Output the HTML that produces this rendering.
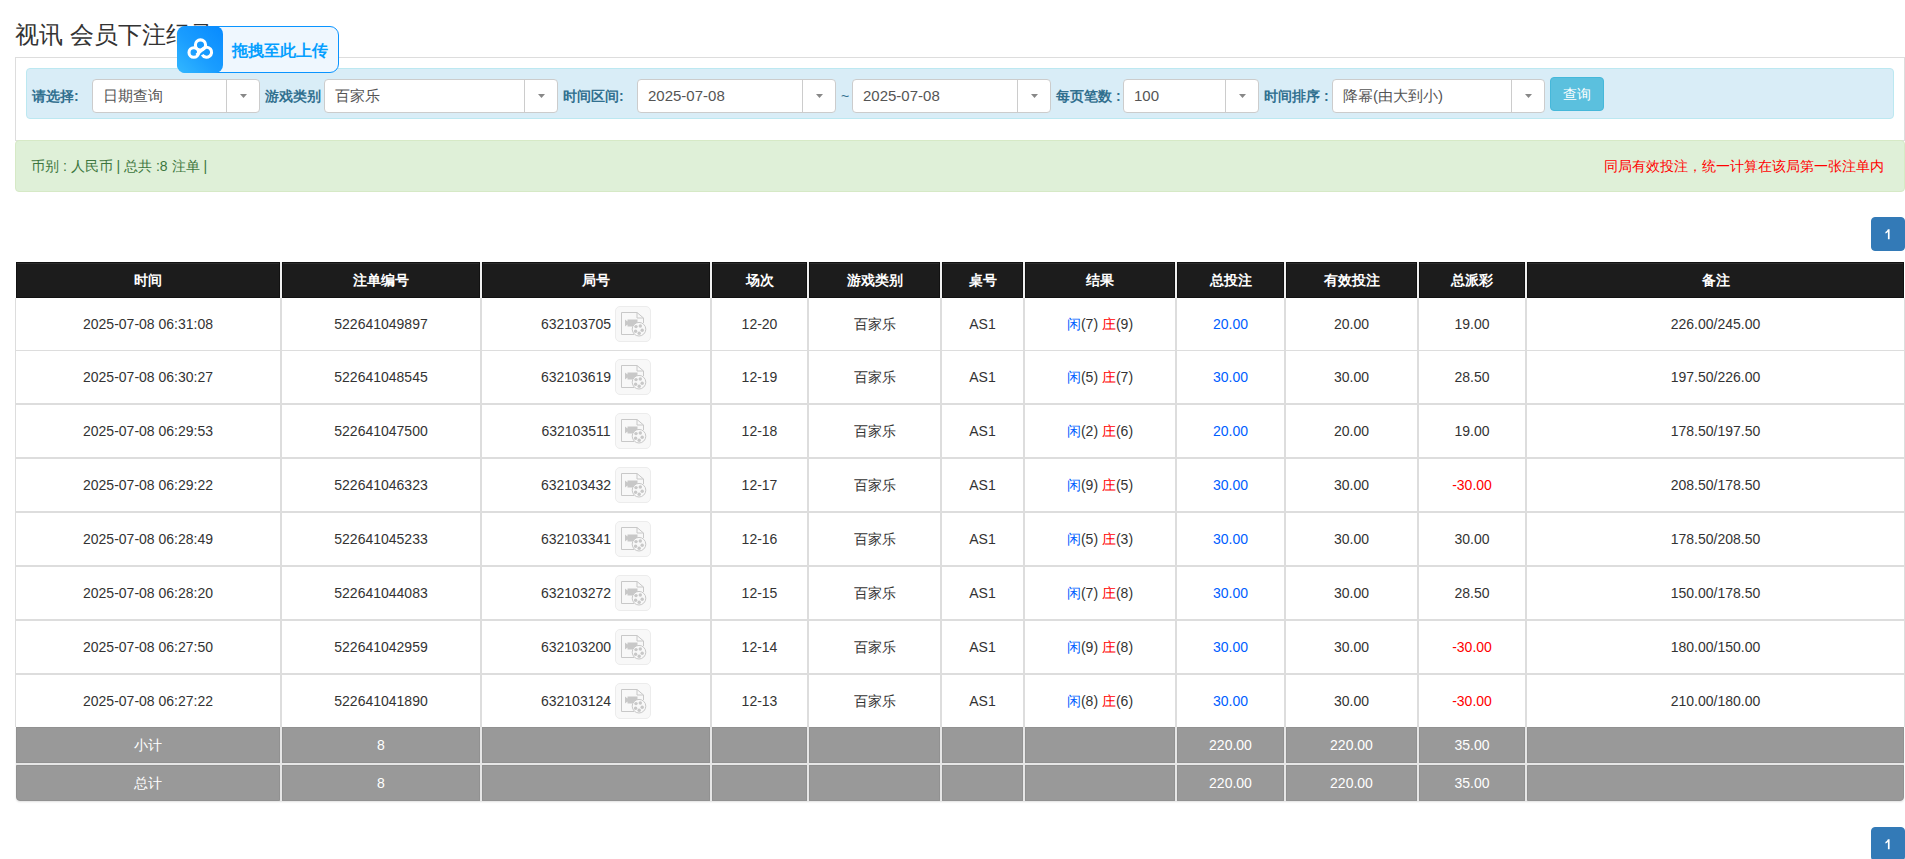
<!DOCTYPE html>
<html><head><meta charset="utf-8">
<style>
*{box-sizing:border-box;margin:0;padding:0}
html,body{width:1905px;height:859px;overflow:hidden;background:#fff}
body{font-family:"Liberation Sans",sans-serif;font-size:14px;color:#333;position:relative}
.abs{position:absolute}
.title{position:absolute;left:15px;top:18px;font-size:24px;line-height:34px;color:#333;white-space:nowrap}
.panel{position:absolute;left:15px;top:57px;width:1890px;height:84px;border:1px solid #ddd;background:#fff}
.well{position:absolute;left:26px;top:68px;width:1868px;height:51px;background:#d9edf7;border:1px solid #bce8f1;border-radius:4px}
.lbl{position:absolute;top:79px;height:34px;line-height:34px;font-size:14px;font-weight:bold;color:#31708f;white-space:nowrap}
.sel{position:absolute;top:79px;height:34px;background:#fff;border:1px solid #ccc;border-radius:4px}
.sel .t{position:absolute;left:10px;top:0;line-height:32px;font-size:15px;color:#555;white-space:nowrap}
.sel .ar{position:absolute;right:0;top:0;width:33px;height:32px;border-left:1px solid #ccc}
.sel .ar:after{content:"";position:absolute;left:13px;top:14px;width:7px;height:4px;background:#888;clip-path:polygon(0 0,100% 0,50% 100%)}
.btn{position:absolute;left:1550px;top:77px;width:54px;height:34px;background:#5bc0de;border:1px solid #46b8da;border-radius:4px;color:#fff;font-size:14px;line-height:32px;text-align:center}
.alert{position:absolute;left:15px;top:140px;width:1890px;height:52px;background:#dff0d8;border:1px solid #d6e9c6;border-radius:4px}
.alert .l{position:absolute;left:15px;top:0;line-height:50px;font-size:14px;color:#3c763d;white-space:nowrap}
.alert .r{position:absolute;right:20px;top:0;line-height:50px;font-size:14px;color:#f00;white-space:nowrap}
.pg{position:absolute;left:1871px;width:34px;height:34px;background:#337ab7;border:1px solid #337ab7;border-radius:4px;color:#fff;font-size:14px;line-height:32px;text-align:center}
.upl{position:absolute;left:177px;top:26px;width:162px;height:47px;border:1px solid #0a94ff;border-radius:9px;background:#eff7fe}
.upt{position:absolute;left:232px;top:39px;font-size:16px;line-height:24px;font-weight:bold;color:#06a0ff;white-space:nowrap}
.th{position:absolute;top:262px;height:36px;background:#1c1c1c;border:1px solid #111;box-shadow:inset 0 1px 0 #2b2b2b;color:#fff;font-weight:bold;font-size:14px;line-height:34px;text-align:center;white-space:nowrap}
.td{position:absolute;background:#fff;text-align:center;white-space:nowrap;font-size:14px;color:#333}
.tf{position:absolute;height:36px;background:#999;border:1px solid #919191;color:#fff;font-size:14px;line-height:34px;text-align:center;white-space:nowrap}
.bl{color:#005eff}.rd{color:#f00}.b2{color:#005eff}
.ic{display:inline-block;vertical-align:middle;margin-left:4px;position:relative;top:-1px}
</style></head><body>
<div class="title">视讯 会员下注纪录</div>
<div class="panel"></div>
<div class="well"></div>
<div class="lbl" style="left:32px">请选择:</div>
<div class="sel" style="left:92px;width:168px"><span class="t">日期查询</span><span class="ar"></span></div>
<div class="lbl" style="left:265px">游戏类别</div>
<div class="sel" style="left:324px;width:234px"><span class="t">百家乐</span><span class="ar"></span></div>
<div class="lbl" style="left:563px">时间区间:</div>
<div class="sel" style="left:637px;width:199px"><span class="t">2025-07-08</span><span class="ar"></span></div>
<div class="lbl" style="left:841px;font-weight:normal">~</div>
<div class="sel" style="left:852px;width:199px"><span class="t">2025-07-08</span><span class="ar"></span></div>
<div class="lbl" style="left:1056px">每页笔数 :</div>
<div class="sel" style="left:1123px;width:136px"><span class="t">100</span><span class="ar"></span></div>
<div class="lbl" style="left:1264px">时间排序 :</div>
<div class="sel" style="left:1332px;width:213px"><span class="t">降幂(由大到小)</span><span class="ar"></span></div>
<div class="btn">查询</div>
<div class="alert"><span class="l">币别 : 人民币 | 总共 :8 注单 |</span><span class="r">同局有效投注，统一计算在该局第一张注单内</span></div>
<div class="pg" style="top:217px"><svg width="32" height="32" viewBox="0 0 32 32" style="position:absolute;left:0;top:0"><path d="M15.9 11.2H17.6V21.2H15.9V13.9Q14.8 14.9 13.4 15.4V14.1Q15.1 13.3 15.9 11.2Z" fill="#fff"/></svg></div>
<div class="abs" style="left:16px;top:262px;width:1888px;height:36px;background:#f0f0f0"></div>
<div class="th" style="left:16px;width:264px">时间</div>
<div class="th" style="left:282px;width:198px">注单编号</div>
<div class="th" style="left:482px;width:228px">局号</div>
<div class="th" style="left:712px;width:95px">场次</div>
<div class="th" style="left:809px;width:131px">游戏类别</div>
<div class="th" style="left:942px;width:81px">桌号</div>
<div class="th" style="left:1025px;width:150px">结果</div>
<div class="th" style="left:1177px;width:107px">总投注</div>
<div class="th" style="left:1286px;width:131px">有效投注</div>
<div class="th" style="left:1419px;width:106px">总派彩</div>
<div class="th" style="left:1527px;width:377px">备注</div>
<div class="abs" style="left:15px;top:298px;width:1890px;height:429px;background:#ddd"></div>
<div class="td" style="left:16px;top:298px;width:264px;height:52px;line-height:52px">2025-07-08 06:31:08</div>
<div class="td" style="left:282px;top:298px;width:198px;height:52px;line-height:52px">522641049897</div>
<div class="td" style="left:482px;top:298px;width:228px;height:52px;line-height:52px">632103705<svg class="ic" width="36" height="36" viewBox="0 0 36 36"><rect x="0.5" y="0.5" width="35" height="35" rx="4.5" fill="#f8f8f8" stroke="#ececec"/><path d="M19 28.5H6.5V6.5H22L28.5 12V17" fill="none" stroke="#c8c8c8"/><path d="M22 6.5V12H28.5" fill="none" stroke="#c8c8c8"/><path d="M10 13.5L12.5 15.5V13.5H22.5V20.5H12.5V18.5L10 20.5Z" fill="#c8c8c8"/><circle cx="24" cy="23.2" r="6.8" fill="#f8f8f8" stroke="#c8c8c8" stroke-width="1"/><circle cx="21" cy="20.6" r="1.7" fill="#c8c8c8"/><circle cx="25.3" cy="20" r="1.7" fill="#c8c8c8"/><circle cx="27.2" cy="24.2" r="1.7" fill="#c8c8c8"/><circle cx="24.2" cy="27.3" r="1.7" fill="#c8c8c8"/><circle cx="20.6" cy="25.2" r="1.7" fill="#c8c8c8"/></svg></div>
<div class="td" style="left:712px;top:298px;width:95px;height:52px;line-height:52px">12-20</div>
<div class="td" style="left:809px;top:298px;width:131px;height:52px;line-height:52px">百家乐</div>
<div class="td" style="left:942px;top:298px;width:81px;height:52px;line-height:52px">AS1</div>
<div class="td" style="left:1025px;top:298px;width:150px;height:52px;line-height:52px"><span class="bl">闲</span>(7) <span class="rd">庄</span>(9)</div>
<div class="td" style="left:1177px;top:298px;width:107px;height:52px;line-height:52px"><span class="b2">20.00</span></div>
<div class="td" style="left:1286px;top:298px;width:131px;height:52px;line-height:52px">20.00</div>
<div class="td" style="left:1419px;top:298px;width:106px;height:52px;line-height:52px">19.00</div>
<div class="td" style="left:1527px;top:298px;width:377px;height:52px;line-height:52px">226.00/245.00</div>
<div class="td" style="left:16px;top:351px;width:264px;height:52px;line-height:52px">2025-07-08 06:30:27</div>
<div class="td" style="left:282px;top:351px;width:198px;height:52px;line-height:52px">522641048545</div>
<div class="td" style="left:482px;top:351px;width:228px;height:52px;line-height:52px">632103619<svg class="ic" width="36" height="36" viewBox="0 0 36 36"><rect x="0.5" y="0.5" width="35" height="35" rx="4.5" fill="#f8f8f8" stroke="#ececec"/><path d="M19 28.5H6.5V6.5H22L28.5 12V17" fill="none" stroke="#c8c8c8"/><path d="M22 6.5V12H28.5" fill="none" stroke="#c8c8c8"/><path d="M10 13.5L12.5 15.5V13.5H22.5V20.5H12.5V18.5L10 20.5Z" fill="#c8c8c8"/><circle cx="24" cy="23.2" r="6.8" fill="#f8f8f8" stroke="#c8c8c8" stroke-width="1"/><circle cx="21" cy="20.6" r="1.7" fill="#c8c8c8"/><circle cx="25.3" cy="20" r="1.7" fill="#c8c8c8"/><circle cx="27.2" cy="24.2" r="1.7" fill="#c8c8c8"/><circle cx="24.2" cy="27.3" r="1.7" fill="#c8c8c8"/><circle cx="20.6" cy="25.2" r="1.7" fill="#c8c8c8"/></svg></div>
<div class="td" style="left:712px;top:351px;width:95px;height:52px;line-height:52px">12-19</div>
<div class="td" style="left:809px;top:351px;width:131px;height:52px;line-height:52px">百家乐</div>
<div class="td" style="left:942px;top:351px;width:81px;height:52px;line-height:52px">AS1</div>
<div class="td" style="left:1025px;top:351px;width:150px;height:52px;line-height:52px"><span class="bl">闲</span>(5) <span class="rd">庄</span>(7)</div>
<div class="td" style="left:1177px;top:351px;width:107px;height:52px;line-height:52px"><span class="b2">30.00</span></div>
<div class="td" style="left:1286px;top:351px;width:131px;height:52px;line-height:52px">30.00</div>
<div class="td" style="left:1419px;top:351px;width:106px;height:52px;line-height:52px">28.50</div>
<div class="td" style="left:1527px;top:351px;width:377px;height:52px;line-height:52px">197.50/226.00</div>
<div class="td" style="left:16px;top:405px;width:264px;height:52px;line-height:52px">2025-07-08 06:29:53</div>
<div class="td" style="left:282px;top:405px;width:198px;height:52px;line-height:52px">522641047500</div>
<div class="td" style="left:482px;top:405px;width:228px;height:52px;line-height:52px">632103511<svg class="ic" width="36" height="36" viewBox="0 0 36 36"><rect x="0.5" y="0.5" width="35" height="35" rx="4.5" fill="#f8f8f8" stroke="#ececec"/><path d="M19 28.5H6.5V6.5H22L28.5 12V17" fill="none" stroke="#c8c8c8"/><path d="M22 6.5V12H28.5" fill="none" stroke="#c8c8c8"/><path d="M10 13.5L12.5 15.5V13.5H22.5V20.5H12.5V18.5L10 20.5Z" fill="#c8c8c8"/><circle cx="24" cy="23.2" r="6.8" fill="#f8f8f8" stroke="#c8c8c8" stroke-width="1"/><circle cx="21" cy="20.6" r="1.7" fill="#c8c8c8"/><circle cx="25.3" cy="20" r="1.7" fill="#c8c8c8"/><circle cx="27.2" cy="24.2" r="1.7" fill="#c8c8c8"/><circle cx="24.2" cy="27.3" r="1.7" fill="#c8c8c8"/><circle cx="20.6" cy="25.2" r="1.7" fill="#c8c8c8"/></svg></div>
<div class="td" style="left:712px;top:405px;width:95px;height:52px;line-height:52px">12-18</div>
<div class="td" style="left:809px;top:405px;width:131px;height:52px;line-height:52px">百家乐</div>
<div class="td" style="left:942px;top:405px;width:81px;height:52px;line-height:52px">AS1</div>
<div class="td" style="left:1025px;top:405px;width:150px;height:52px;line-height:52px"><span class="bl">闲</span>(2) <span class="rd">庄</span>(6)</div>
<div class="td" style="left:1177px;top:405px;width:107px;height:52px;line-height:52px"><span class="b2">20.00</span></div>
<div class="td" style="left:1286px;top:405px;width:131px;height:52px;line-height:52px">20.00</div>
<div class="td" style="left:1419px;top:405px;width:106px;height:52px;line-height:52px">19.00</div>
<div class="td" style="left:1527px;top:405px;width:377px;height:52px;line-height:52px">178.50/197.50</div>
<div class="td" style="left:16px;top:459px;width:264px;height:52px;line-height:52px">2025-07-08 06:29:22</div>
<div class="td" style="left:282px;top:459px;width:198px;height:52px;line-height:52px">522641046323</div>
<div class="td" style="left:482px;top:459px;width:228px;height:52px;line-height:52px">632103432<svg class="ic" width="36" height="36" viewBox="0 0 36 36"><rect x="0.5" y="0.5" width="35" height="35" rx="4.5" fill="#f8f8f8" stroke="#ececec"/><path d="M19 28.5H6.5V6.5H22L28.5 12V17" fill="none" stroke="#c8c8c8"/><path d="M22 6.5V12H28.5" fill="none" stroke="#c8c8c8"/><path d="M10 13.5L12.5 15.5V13.5H22.5V20.5H12.5V18.5L10 20.5Z" fill="#c8c8c8"/><circle cx="24" cy="23.2" r="6.8" fill="#f8f8f8" stroke="#c8c8c8" stroke-width="1"/><circle cx="21" cy="20.6" r="1.7" fill="#c8c8c8"/><circle cx="25.3" cy="20" r="1.7" fill="#c8c8c8"/><circle cx="27.2" cy="24.2" r="1.7" fill="#c8c8c8"/><circle cx="24.2" cy="27.3" r="1.7" fill="#c8c8c8"/><circle cx="20.6" cy="25.2" r="1.7" fill="#c8c8c8"/></svg></div>
<div class="td" style="left:712px;top:459px;width:95px;height:52px;line-height:52px">12-17</div>
<div class="td" style="left:809px;top:459px;width:131px;height:52px;line-height:52px">百家乐</div>
<div class="td" style="left:942px;top:459px;width:81px;height:52px;line-height:52px">AS1</div>
<div class="td" style="left:1025px;top:459px;width:150px;height:52px;line-height:52px"><span class="bl">闲</span>(9) <span class="rd">庄</span>(5)</div>
<div class="td" style="left:1177px;top:459px;width:107px;height:52px;line-height:52px"><span class="b2">30.00</span></div>
<div class="td" style="left:1286px;top:459px;width:131px;height:52px;line-height:52px">30.00</div>
<div class="td" style="left:1419px;top:459px;width:106px;height:52px;line-height:52px"><span class="rd">-30.00</span></div>
<div class="td" style="left:1527px;top:459px;width:377px;height:52px;line-height:52px">208.50/178.50</div>
<div class="td" style="left:16px;top:513px;width:264px;height:52px;line-height:52px">2025-07-08 06:28:49</div>
<div class="td" style="left:282px;top:513px;width:198px;height:52px;line-height:52px">522641045233</div>
<div class="td" style="left:482px;top:513px;width:228px;height:52px;line-height:52px">632103341<svg class="ic" width="36" height="36" viewBox="0 0 36 36"><rect x="0.5" y="0.5" width="35" height="35" rx="4.5" fill="#f8f8f8" stroke="#ececec"/><path d="M19 28.5H6.5V6.5H22L28.5 12V17" fill="none" stroke="#c8c8c8"/><path d="M22 6.5V12H28.5" fill="none" stroke="#c8c8c8"/><path d="M10 13.5L12.5 15.5V13.5H22.5V20.5H12.5V18.5L10 20.5Z" fill="#c8c8c8"/><circle cx="24" cy="23.2" r="6.8" fill="#f8f8f8" stroke="#c8c8c8" stroke-width="1"/><circle cx="21" cy="20.6" r="1.7" fill="#c8c8c8"/><circle cx="25.3" cy="20" r="1.7" fill="#c8c8c8"/><circle cx="27.2" cy="24.2" r="1.7" fill="#c8c8c8"/><circle cx="24.2" cy="27.3" r="1.7" fill="#c8c8c8"/><circle cx="20.6" cy="25.2" r="1.7" fill="#c8c8c8"/></svg></div>
<div class="td" style="left:712px;top:513px;width:95px;height:52px;line-height:52px">12-16</div>
<div class="td" style="left:809px;top:513px;width:131px;height:52px;line-height:52px">百家乐</div>
<div class="td" style="left:942px;top:513px;width:81px;height:52px;line-height:52px">AS1</div>
<div class="td" style="left:1025px;top:513px;width:150px;height:52px;line-height:52px"><span class="bl">闲</span>(5) <span class="rd">庄</span>(3)</div>
<div class="td" style="left:1177px;top:513px;width:107px;height:52px;line-height:52px"><span class="b2">30.00</span></div>
<div class="td" style="left:1286px;top:513px;width:131px;height:52px;line-height:52px">30.00</div>
<div class="td" style="left:1419px;top:513px;width:106px;height:52px;line-height:52px">30.00</div>
<div class="td" style="left:1527px;top:513px;width:377px;height:52px;line-height:52px">178.50/208.50</div>
<div class="td" style="left:16px;top:567px;width:264px;height:52px;line-height:52px">2025-07-08 06:28:20</div>
<div class="td" style="left:282px;top:567px;width:198px;height:52px;line-height:52px">522641044083</div>
<div class="td" style="left:482px;top:567px;width:228px;height:52px;line-height:52px">632103272<svg class="ic" width="36" height="36" viewBox="0 0 36 36"><rect x="0.5" y="0.5" width="35" height="35" rx="4.5" fill="#f8f8f8" stroke="#ececec"/><path d="M19 28.5H6.5V6.5H22L28.5 12V17" fill="none" stroke="#c8c8c8"/><path d="M22 6.5V12H28.5" fill="none" stroke="#c8c8c8"/><path d="M10 13.5L12.5 15.5V13.5H22.5V20.5H12.5V18.5L10 20.5Z" fill="#c8c8c8"/><circle cx="24" cy="23.2" r="6.8" fill="#f8f8f8" stroke="#c8c8c8" stroke-width="1"/><circle cx="21" cy="20.6" r="1.7" fill="#c8c8c8"/><circle cx="25.3" cy="20" r="1.7" fill="#c8c8c8"/><circle cx="27.2" cy="24.2" r="1.7" fill="#c8c8c8"/><circle cx="24.2" cy="27.3" r="1.7" fill="#c8c8c8"/><circle cx="20.6" cy="25.2" r="1.7" fill="#c8c8c8"/></svg></div>
<div class="td" style="left:712px;top:567px;width:95px;height:52px;line-height:52px">12-15</div>
<div class="td" style="left:809px;top:567px;width:131px;height:52px;line-height:52px">百家乐</div>
<div class="td" style="left:942px;top:567px;width:81px;height:52px;line-height:52px">AS1</div>
<div class="td" style="left:1025px;top:567px;width:150px;height:52px;line-height:52px"><span class="bl">闲</span>(7) <span class="rd">庄</span>(8)</div>
<div class="td" style="left:1177px;top:567px;width:107px;height:52px;line-height:52px"><span class="b2">30.00</span></div>
<div class="td" style="left:1286px;top:567px;width:131px;height:52px;line-height:52px">30.00</div>
<div class="td" style="left:1419px;top:567px;width:106px;height:52px;line-height:52px">28.50</div>
<div class="td" style="left:1527px;top:567px;width:377px;height:52px;line-height:52px">150.00/178.50</div>
<div class="td" style="left:16px;top:621px;width:264px;height:52px;line-height:52px">2025-07-08 06:27:50</div>
<div class="td" style="left:282px;top:621px;width:198px;height:52px;line-height:52px">522641042959</div>
<div class="td" style="left:482px;top:621px;width:228px;height:52px;line-height:52px">632103200<svg class="ic" width="36" height="36" viewBox="0 0 36 36"><rect x="0.5" y="0.5" width="35" height="35" rx="4.5" fill="#f8f8f8" stroke="#ececec"/><path d="M19 28.5H6.5V6.5H22L28.5 12V17" fill="none" stroke="#c8c8c8"/><path d="M22 6.5V12H28.5" fill="none" stroke="#c8c8c8"/><path d="M10 13.5L12.5 15.5V13.5H22.5V20.5H12.5V18.5L10 20.5Z" fill="#c8c8c8"/><circle cx="24" cy="23.2" r="6.8" fill="#f8f8f8" stroke="#c8c8c8" stroke-width="1"/><circle cx="21" cy="20.6" r="1.7" fill="#c8c8c8"/><circle cx="25.3" cy="20" r="1.7" fill="#c8c8c8"/><circle cx="27.2" cy="24.2" r="1.7" fill="#c8c8c8"/><circle cx="24.2" cy="27.3" r="1.7" fill="#c8c8c8"/><circle cx="20.6" cy="25.2" r="1.7" fill="#c8c8c8"/></svg></div>
<div class="td" style="left:712px;top:621px;width:95px;height:52px;line-height:52px">12-14</div>
<div class="td" style="left:809px;top:621px;width:131px;height:52px;line-height:52px">百家乐</div>
<div class="td" style="left:942px;top:621px;width:81px;height:52px;line-height:52px">AS1</div>
<div class="td" style="left:1025px;top:621px;width:150px;height:52px;line-height:52px"><span class="bl">闲</span>(9) <span class="rd">庄</span>(8)</div>
<div class="td" style="left:1177px;top:621px;width:107px;height:52px;line-height:52px"><span class="b2">30.00</span></div>
<div class="td" style="left:1286px;top:621px;width:131px;height:52px;line-height:52px">30.00</div>
<div class="td" style="left:1419px;top:621px;width:106px;height:52px;line-height:52px"><span class="rd">-30.00</span></div>
<div class="td" style="left:1527px;top:621px;width:377px;height:52px;line-height:52px">180.00/150.00</div>
<div class="td" style="left:16px;top:675px;width:264px;height:52px;line-height:52px">2025-07-08 06:27:22</div>
<div class="td" style="left:282px;top:675px;width:198px;height:52px;line-height:52px">522641041890</div>
<div class="td" style="left:482px;top:675px;width:228px;height:52px;line-height:52px">632103124<svg class="ic" width="36" height="36" viewBox="0 0 36 36"><rect x="0.5" y="0.5" width="35" height="35" rx="4.5" fill="#f8f8f8" stroke="#ececec"/><path d="M19 28.5H6.5V6.5H22L28.5 12V17" fill="none" stroke="#c8c8c8"/><path d="M22 6.5V12H28.5" fill="none" stroke="#c8c8c8"/><path d="M10 13.5L12.5 15.5V13.5H22.5V20.5H12.5V18.5L10 20.5Z" fill="#c8c8c8"/><circle cx="24" cy="23.2" r="6.8" fill="#f8f8f8" stroke="#c8c8c8" stroke-width="1"/><circle cx="21" cy="20.6" r="1.7" fill="#c8c8c8"/><circle cx="25.3" cy="20" r="1.7" fill="#c8c8c8"/><circle cx="27.2" cy="24.2" r="1.7" fill="#c8c8c8"/><circle cx="24.2" cy="27.3" r="1.7" fill="#c8c8c8"/><circle cx="20.6" cy="25.2" r="1.7" fill="#c8c8c8"/></svg></div>
<div class="td" style="left:712px;top:675px;width:95px;height:52px;line-height:52px">12-13</div>
<div class="td" style="left:809px;top:675px;width:131px;height:52px;line-height:52px">百家乐</div>
<div class="td" style="left:942px;top:675px;width:81px;height:52px;line-height:52px">AS1</div>
<div class="td" style="left:1025px;top:675px;width:150px;height:52px;line-height:52px"><span class="bl">闲</span>(8) <span class="rd">庄</span>(6)</div>
<div class="td" style="left:1177px;top:675px;width:107px;height:52px;line-height:52px"><span class="b2">30.00</span></div>
<div class="td" style="left:1286px;top:675px;width:131px;height:52px;line-height:52px">30.00</div>
<div class="td" style="left:1419px;top:675px;width:106px;height:52px;line-height:52px"><span class="rd">-30.00</span></div>
<div class="td" style="left:1527px;top:675px;width:377px;height:52px;line-height:52px">210.00/180.00</div>
<div class="abs" style="left:16px;top:727px;width:1888px;height:74px;background:#e6e6e6;border-radius:0 0 4px 4px;box-shadow:0 1px 2px rgba(0,0,0,.12)"></div>
<div class="tf" style="left:16px;top:727px;width:264px;">小计</div>
<div class="tf" style="left:282px;top:727px;width:198px;">8</div>
<div class="tf" style="left:482px;top:727px;width:228px;"></div>
<div class="tf" style="left:712px;top:727px;width:95px;"></div>
<div class="tf" style="left:809px;top:727px;width:131px;"></div>
<div class="tf" style="left:942px;top:727px;width:81px;"></div>
<div class="tf" style="left:1025px;top:727px;width:150px;"></div>
<div class="tf" style="left:1177px;top:727px;width:107px;">220.00</div>
<div class="tf" style="left:1286px;top:727px;width:131px;">220.00</div>
<div class="tf" style="left:1419px;top:727px;width:106px;">35.00</div>
<div class="tf" style="left:1527px;top:727px;width:377px;"></div>
<div class="tf" style="left:16px;top:765px;width:264px;border-bottom-left-radius:4px;">总计</div>
<div class="tf" style="left:282px;top:765px;width:198px;">8</div>
<div class="tf" style="left:482px;top:765px;width:228px;"></div>
<div class="tf" style="left:712px;top:765px;width:95px;"></div>
<div class="tf" style="left:809px;top:765px;width:131px;"></div>
<div class="tf" style="left:942px;top:765px;width:81px;"></div>
<div class="tf" style="left:1025px;top:765px;width:150px;"></div>
<div class="tf" style="left:1177px;top:765px;width:107px;">220.00</div>
<div class="tf" style="left:1286px;top:765px;width:131px;">220.00</div>
<div class="tf" style="left:1419px;top:765px;width:106px;">35.00</div>
<div class="tf" style="left:1527px;top:765px;width:377px;border-bottom-right-radius:4px;"></div>
<div class="pg" style="top:827px"><svg width="32" height="32" viewBox="0 0 32 32" style="position:absolute;left:0;top:0"><path d="M15.9 11.2H17.6V21.2H15.9V13.9Q14.8 14.9 13.4 15.4V14.1Q15.1 13.3 15.9 11.2Z" fill="#fff"/></svg></div>
<div class="upl"></div>
<div class="abs" style="left:177px;top:26px;width:46px;height:47px;border-radius:8px;background:linear-gradient(45deg,#33b8ff 0%,#1a9dff 45%,#078aff 100%)"><svg width="46" height="47" viewBox="0 0 46 47" style="position:absolute;left:0;top:0"><g fill="none" stroke="#fff" stroke-width="3.1"><circle cx="23.5" cy="19" r="5.1"/><circle cx="16.8" cy="26.5" r="4.8"/><path d="M19.6 29.1L26.06 22.66A5 5 0 1 1 25.27 28.7"/></g></svg></div>
<div class="upt">拖拽至此上传</div>
</body></html>
